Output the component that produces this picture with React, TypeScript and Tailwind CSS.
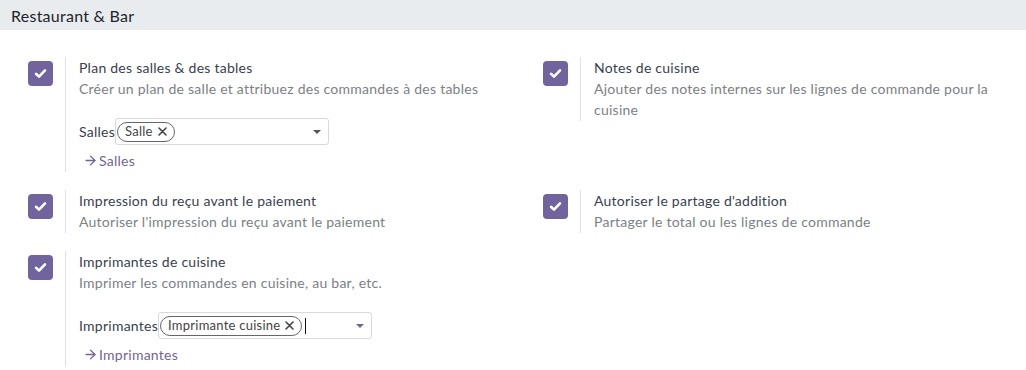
import { ArrowRight } from "lucide-react";

function Check() {
  return (
    <div className="w-[25px] h-[25px] rounded-[4px] bg-[#71639e] flex items-center justify-center">
      <svg width="13" height="11" viewBox="0 0 13 11" fill="none">
        <path d="M2 5.8 L5 8.6 L11 2.4" stroke="white" strokeWidth="2.6" strokeLinecap="round" strokeLinejoin="round" />
      </svg>
    </div>
  );
}

function Tag({ label }: { label: string }) {
  return (
    <span className="flex items-center gap-[5px] h-[20px] px-[7px] rounded-full border border-[#666] text-[13px] text-[#444] leading-none">
      {label}
      <svg width="9" height="9" viewBox="0 0 9 9">
        <path d="M1 1 L8 8 M8 1 L1 8" stroke="#444" strokeWidth="1.6" strokeLinecap="round" />
      </svg>
    </span>
  );
}

function Many2Many({ label, tag, focused }: { label: string; tag: string; focused?: boolean }) {
  return (
    <div className="flex items-center mt-[19px]">
      <span className="text-[#374151]">{label}</span>
      <div className="flex items-center w-[214px] h-[27px] pl-px pr-[7px] border border-[#d8dadd] rounded-[3px]">
        <Tag label={tag} />
        {focused && <span className="ml-[3px] w-px h-[16px] bg-[#111]" />}
        <span className="flex-1" />
        <svg width="8" height="4" viewBox="0 0 8 4">
          <path d="M0 0 L8 0 L4 4 Z" fill={focused ? "#71639e" : "#555"} />
        </svg>
      </div>
    </div>
  );
}

function Link({ label }: { label: string }) {
  return (
    <div className="flex items-center mt-[5px] ml-[4px] text-[#71639e]">
      <ArrowRight size={15} strokeWidth={2.2} className="mr-px" />
      <span>{label}</span>
    </div>
  );
}

function Setting({ title, desc, children }: { title: string; desc: string; children?: React.ReactNode }) {
  return (
    <div className="flex">
      <div className="ml-[28px] w-[25px] pt-[4px] mr-[12px]">
        <Check />
      </div>
      <div className="border-l border-[#dee2e6] pl-[13px] pb-[1px] max-w-[420px]">
        <div className="text-[#374151]">{title}</div>
        <div className="text-[#7b7f86]">{desc}</div>
        {children}
      </div>
    </div>
  );
}

export default function App() {
  return (
    <div className="w-[1026px] h-[370px] bg-white overflow-hidden text-[14px] leading-[21px] tracking-[0.25px]" style={{ fontFamily: "Lato, 'Noto Sans', sans-serif" }}>
      <div className="h-[30px] bg-[#e9ecef] flex items-center px-[11px] text-[16px] text-[#212529]">Restaurant &amp; Bar</div>
      <div className="grid grid-cols-[515px_1fr] items-start gap-y-[18px] pt-[27px]">
        <Setting title="Plan des salles & des tables" desc="Créer un plan de salle et attribuez des commandes à des tables">
          <Many2Many label="Salles" tag="Salle" />
          <Link label="Salles" />
        </Setting>
        <Setting title="Notes de cuisine" desc="Ajouter des notes internes sur les lignes de commande pour la cuisine" />
        <Setting title="Impression du reçu avant le paiement" desc="Autoriser l'impression du reçu avant le paiement" />
        <Setting title="Autoriser le partage d'addition" desc="Partager le total ou les lignes de commande" />
        <Setting title="Imprimantes de cuisine" desc="Imprimer les commandes en cuisine, au bar, etc.">
          <Many2Many label="Imprimantes" tag="Imprimante cuisine" focused />
          <Link label="Imprimantes" />
        </Setting>
      </div>
    </div>
  );
}
